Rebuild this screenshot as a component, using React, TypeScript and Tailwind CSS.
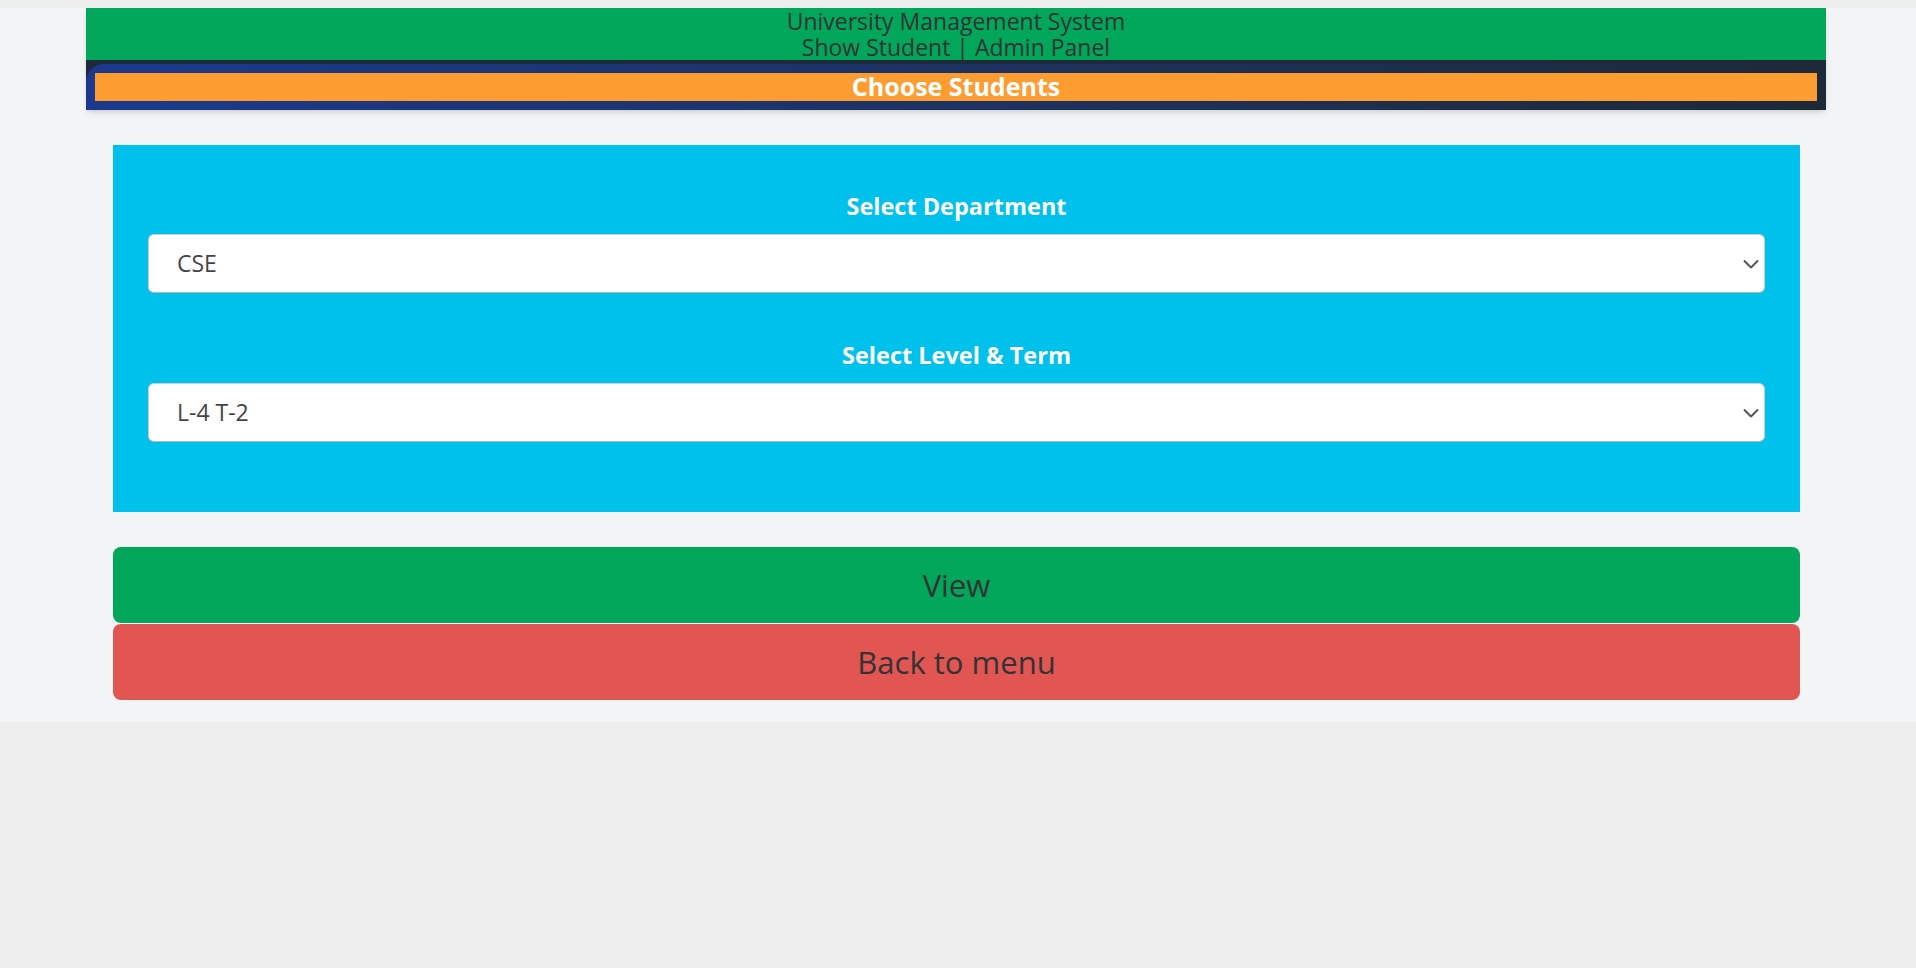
import React from "react";

const Chevron = () => (
  <svg
    width="16"
    height="9"
    viewBox="0 0 16 9"
    className="pointer-events-none absolute right-[6px] top-1/2 -translate-y-1/2"
  >
    <path d="M1 1 L8 8 L15 1" fill="none" stroke="#555" strokeWidth="2" />
  </svg>
);

interface PickProps {
  label: string;
  value: string;
  options: string[];
}

const Pick: React.FC<PickProps> = ({ label, value, options }) => (
  <div className="flex flex-col">
    <label className="text-center text-[23.5px] font-bold leading-[28px] text-white">{label}</label>
    <div className="relative mt-[14px]">
      <select
        defaultValue={value}
        className="h-[59px] w-full appearance-none rounded-[6px] border border-[#cfcfcf] border-b-[#b5b5b5] bg-white pl-[28px] text-[23px] text-[#444] outline-none"
        style={{ fontFamily: "'Open Sans', sans-serif" }}
      >
        {options.map((o) => (
          <option key={o}>{o}</option>
        ))}
      </select>
      <Chevron />
    </div>
  </div>
);

export default function App() {
  return (
    <div className="min-h-[968px] bg-[#eeeeee] pt-2" style={{ fontFamily: "'Open Sans', 'Noto Sans', sans-serif" }}>
      <div className="bg-gray-100 pb-[22px] pl-[86px] pr-[90px]">
        <header className="shadow-md">
          <div className="h-[52px] bg-[#00a65a] text-center text-[23px] leading-[26px] text-[#333]">
            <p>
              University Management System
              <br />
              Show Student | Admin Panel
            </p>
          </div>
          <div className="bg-gray-800 pt-1">
            <div className="rounded-tl-[18px] bg-linear-to-r from-blue-900 to-gray-800 p-[9px]">
              <div className="h-[28px] bg-[#fd9c31] text-center text-[25px] font-bold leading-[27px] text-white">
                Choose Students
              </div>
            </div>
          </div>
        </header>

        <main className="ml-[27px] mr-[26px] mt-[35px]">
          <section className="flex flex-col gap-[48px] bg-[#00c0ec] px-[35px] pb-[70px] pt-[47px]">
            <Pick label="Select Department" value="CSE" options={["CSE", "EEE", "ME", "CE"]} />
            <Pick
              label="Select Level & Term"
              value="L-4 T-2"
              options={["L-1 T-1", "L-1 T-2", "L-2 T-1", "L-2 T-2", "L-3 T-1", "L-3 T-2", "L-4 T-1", "L-4 T-2"]}
            />
          </section>

          <div className="mt-[35px] flex flex-col gap-[1px]">
            <button className="h-[76px] w-full rounded-[8px] bg-[#00a65a] text-[31px] text-[#333]">View</button>
            <button className="h-[76px] w-full rounded-[8px] bg-[#e15553] text-[31px] text-[#333]">Back to menu</button>
          </div>
        </main>
      </div>
    </div>
  );
}
